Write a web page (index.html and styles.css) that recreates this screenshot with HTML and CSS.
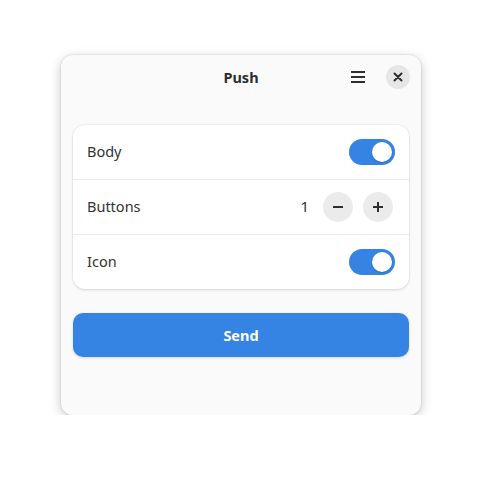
FILE: index.html
```html
<!DOCTYPE html>
<html lang="en">
<head>
    <meta charset="UTF-8">
    <meta name="viewport" content="width=device-width, initial-scale=1.0">
    <title>Push</title>
    <link rel="stylesheet" href="styles.css">
</head>
<body>
    <div class="window">
        <div class="headerbar">
            <div class="title">Push</div>
            <div class="header-actions">
                <button class="menu-button" aria-label="Menu">
                    <svg width="16" height="16" viewBox="0 0 16 16">
                        <path d="M1 3h14M1 8h14M1 13h14" stroke="#2e2e2e" stroke-width="2" fill="none"/>
                    </svg>
                </button>
                <button class="close-button" aria-label="Close">
                    <svg width="10" height="10" viewBox="0 0 10 10">
                        <path d="M1.5 1.5l7 7M8.5 1.5l-7 7" stroke="#2e2e2e" stroke-width="2" fill="none" stroke-linecap="round"/>
                    </svg>
                </button>
            </div>
        </div>

        <div class="content">
            <div class="card">
                <div class="row">
                    <span class="label">Body</span>
                    <div class="switch"><div class="knob"></div></div>
                </div>
                <div class="row">
                    <span class="label">Buttons</span>
                    <div class="stepper">
                        <span class="value">1</span>
                        <button class="round">
                            <svg width="12" height="12" viewBox="0 0 12 12">
                                <path d="M1 6h10" stroke="#2e2e2e" stroke-width="2"/>
                            </svg>
                        </button>
                        <button class="round">
                            <svg width="12" height="12" viewBox="0 0 12 12">
                                <path d="M1 6h10M6 1v10" stroke="#2e2e2e" stroke-width="2"/>
                            </svg>
                        </button>
                    </div>
                </div>
                <div class="row">
                    <span class="label">Icon</span>
                    <div class="switch"><div class="knob"></div></div>
                </div>
            </div>

            <button class="send">Send</button>
        </div>
    </div>
</body>
</html>
```

FILE: styles.css
```css
body {
    font-family: 'Noto Sans', 'Open Sans', sans-serif;
    background-color: #ffffff;
    margin: 0;
    padding: 55px 0 0 61px;
    color: #333333;
}

.window {
    width: 360px;
    height: 360px;
    background-color: #fafafa;
    border-radius: 12px;
    box-shadow: 0 0 0 1px rgba(0, 0, 0, 0.05), 0 3px 12px rgba(0, 0, 0, 0.22);
    display: flex;
    flex-direction: column;
}

.headerbar {
    height: 46px;
    display: flex;
    align-items: center;
    justify-content: center;
    position: relative;
}

.title {
    font-weight: bold;
    font-size: 14.5px;
    margin-top: -2px;
    color: #2e2e2e;
}

.header-actions {
    position: absolute;
    right: 11px;
    top: 10px;
    display: flex;
    align-items: center;
    gap: 16px;
}

button {
    border: none;
    padding: 0;
    font-family: inherit;
    cursor: pointer;
    display: flex;
    align-items: center;
    justify-content: center;
}

.menu-button {
    width: 24px;
    height: 24px;
    background: none;
}

.close-button {
    width: 24px;
    height: 24px;
    border-radius: 50%;
    background-color: #e6e6e6;
}

.content {
    padding: 24px 12px;
    display: flex;
    flex-direction: column;
    gap: 24px;
}

.card {
    background-color: #ffffff;
    border-radius: 12px;
    box-shadow: 0 0 0 1px rgba(0, 0, 0, 0.03), 0 1px 3px rgba(0, 0, 0, 0.12);
}

.row {
    height: 54px;
    display: flex;
    align-items: center;
    justify-content: space-between;
    padding: 0 14px;
    border-bottom: 1px solid #ebebeb;
}

.row:last-child {
    border-bottom: none;
}

.label {
    font-size: 14.5px;
    margin-top: -2px;
}

.switch {
    width: 46px;
    height: 26px;
    border-radius: 13px;
    background-color: #3584e4;
    display: flex;
    align-items: center;
    justify-content: flex-end;
    padding: 0 3px;
    box-sizing: border-box;
}

.knob {
    width: 20px;
    height: 20px;
    border-radius: 50%;
    background-color: #ffffff;
    box-shadow: 0 1px 2px rgba(0, 0, 0, 0.2);
}

.stepper {
    display: flex;
    align-items: center;
    gap: 10px;
    margin-right: 2px;
}

.value {
    font-size: 15px;
    margin-right: 4px;
    margin-top: -2px;
}

.round {
    width: 30px;
    height: 30px;
    border-radius: 50%;
    background-color: #ebebeb;
}

.send {
    height: 44px;
    border-radius: 10px;
    background-color: #3584e4;
    color: #ffffff;
    font-weight: bold;
    font-size: 14.5px;
    box-shadow: 0 1px 3px rgba(0, 0, 0, 0.15);
}
```
